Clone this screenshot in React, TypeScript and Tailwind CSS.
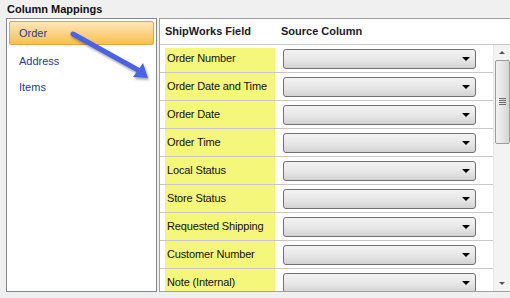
import React from 'react';

const fields = [
  'Order Number',
  'Order Date and Time',
  'Order Date',
  'Order Time',
  'Local Status',
  'Store Status',
  'Requested Shipping',
  'Customer Number',
  'Note (Internal)',
];

const sections = ['Order', 'Address', 'Items'];

const Dropdown = () => (
  <div className="relative h-[20px] w-[193px] rounded-[3px] border border-[#707070] bg-gradient-to-b from-[#f3f3f3] via-[#e8e8e8] to-[#d3d3d3]">
    <div className="absolute right-[5px] top-[7px] h-0 w-0 border-x-[4px] border-t-[4px] border-x-transparent border-t-black" />
  </div>
);

const Scrollbar = () => (
  <div className="flex w-[17px] flex-col items-center border-l border-[#e6e6e6] bg-[#f3f3f3]">
    <div className="flex h-[15px] w-full items-center justify-center">
      <div className="h-0 w-0 border-x-[3px] border-b-[3px] border-x-transparent border-b-[#555]" />
    </div>
    <div className="relative ml-[1px] h-[84px] w-[15px] rounded-[2px] border border-[#9c9c9c] bg-gradient-to-r from-[#f2f2f2] via-[#e6e6e6] to-[#d4d4d4]">
      <div className="absolute left-[3px] top-[37px] flex w-[7px] flex-col gap-[1px]">
        <div className="h-[1px] bg-[#6a6a6a]" />
        <div className="h-[1px] bg-[#6a6a6a]" />
        <div className="h-[1px] bg-[#6a6a6a]" />
        <div className="h-[1px] bg-[#6a6a6a]" />
      </div>
    </div>
    <div className="flex-1" />
    <div className="flex h-[16px] w-full items-center justify-center">
      <div className="h-0 w-0 border-x-[3px] border-t-[3px] border-x-transparent border-t-[#555]" />
    </div>
  </div>
);

const App = () => {
  return (
    <div
      className="relative h-[298px] w-[510px] overflow-hidden bg-[#f0f0f0] text-[11px] leading-none"
      style={{ fontFamily: '"Liberation Sans", Arial, sans-serif' }}
    >
      <div className="flex h-[18px] items-center pl-[7px] font-bold text-[#111]">Column Mappings</div>

      <div className="flex">
        {/* sections list */}
        <div className="ml-[6px] h-[274px] w-[151px] border border-[#828790] bg-white px-[2px] pt-[2px]">
          <div className="flex h-[24px] items-center rounded-[2px] border border-[#e8a33c] bg-gradient-to-b from-[#fde8b8] via-[#fcd285] to-[#fbc04a] pl-[9px] text-[#1c3d97]">
            Order
          </div>
          <div className="mt-[3px]">
            {sections.slice(1).map((s) => (
              <div key={s} className="flex h-[26px] items-center pl-[10px] text-[#1c3d97]">
                {s}
              </div>
            ))}
          </div>
        </div>

        {/* mapping grid */}
        <div className="ml-[2px] flex h-[274px] flex-1 flex-col border-y border-l border-[#a0a0a0] bg-white">
          <div className="flex h-[26px] shrink-0 items-center border-b border-[#c8c8c8] font-bold text-[#1a1a2a]">
            <div className="w-[121px] pl-[5px]">ShipWorks Field</div>
            <div>Source Column</div>
          </div>
          <div className="flex min-h-0 flex-1">
            <div className="flex-1 overflow-hidden">
              {fields.map((f, i) => (
                <div key={f} className="flex h-[28px] border-b border-[#c8c8c8]">
                  <div
                    className={
                      i === 0
                        ? 'ml-[5px] mt-[3px] flex w-[110px] items-center bg-[#f4f779] pb-[3px] pl-[2px] tracking-[-0.15px] text-[#111]'
                        : 'ml-[5px] flex w-[110px] items-center bg-[#f4f779] pl-[2px] tracking-[-0.15px] text-[#111]'
                    }
                  >
                    {f}
                  </div>
                  <div className="ml-[8px] flex items-center">
                    <Dropdown />
                  </div>
                </div>
              ))}
            </div>
            <Scrollbar />
          </div>
        </div>
      </div>

      {/* pointer arrow drawn over the panels */}
      <svg className="pointer-events-none absolute left-0 top-0" width="510" height="298">
        <defs>
          <filter id="sh" x="-20%" y="-20%" width="140%" height="140%">
            <feDropShadow dx="1" dy="2" stdDeviation="1.2" floodColor="#000" floodOpacity="0.35" />
          </filter>
        </defs>
        <g filter="url(#sh)">
          <line x1="73" y1="34" x2="138" y2="70" stroke="#4a63e4" strokeWidth="5" strokeLinecap="round" />
          <polygon points="148,78 133,77 143,63" fill="#4a63e4" />
        </g>
      </svg>
    </div>
  );
};

export default App;
